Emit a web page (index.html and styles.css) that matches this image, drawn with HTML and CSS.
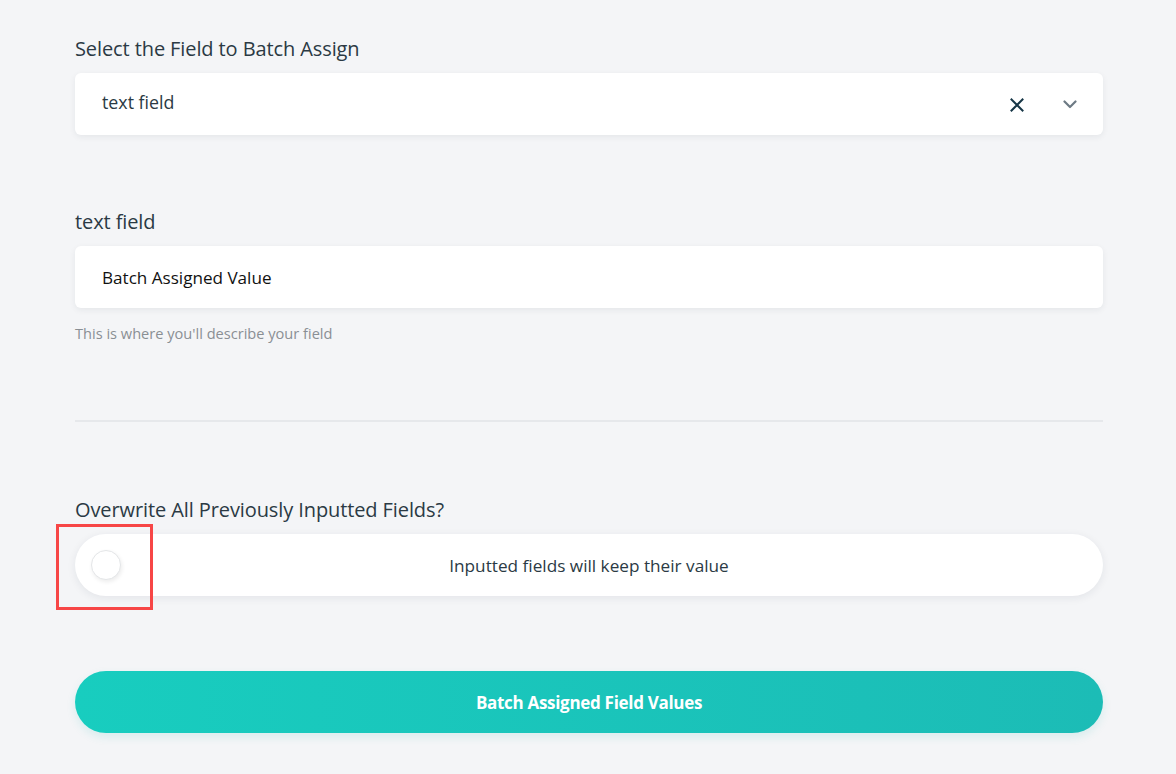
FILE: index.html
```html
<!DOCTYPE html>
<html>
<head>
<meta charset="utf-8">
<link rel="stylesheet" href="styles.css">
</head>
<body>
<main class="form">
  <section class="group group-select">
    <label class="label">Select the Field to Batch Assign</label>
    <div class="box select">
      <span class="select-value">text field</span>
      <span class="select-icons">
        <svg class="icon-x" width="14" height="14" viewBox="0 0 14 14"><path d="M1.5 1.5 L12.5 12.5 M12.5 1.5 L1.5 12.5" stroke="#163646" stroke-width="2" stroke-linecap="square" fill="none"/></svg>
        <svg class="icon-chev" width="14" height="9" viewBox="0 0 14 9"><path d="M1.5 1.5 L7 7 L12.5 1.5" stroke="#6d7a84" stroke-width="2.2" fill="none" stroke-linecap="round" stroke-linejoin="round"/></svg>
      </span>
    </div>
  </section>

  <section class="group group-text">
    <label class="label">text field</label>
    <div class="box input">Batch Assigned Value</div>
    <p class="help">This is where you'll describe your field</p>
  </section>

  <hr class="divider">

  <section class="group group-toggle">
    <label class="label">Overwrite All Previously Inputted Fields?</label>
    <div class="toggle">
      <span class="knob"></span>
      <span class="toggle-text">Inputted fields will keep their value</span>
      <span class="highlight"></span>
    </div>
  </section>

  <button class="submit">Batch Assigned Field Values</button>
</main>
</body>
</html>
```
FILE: styles.css
```css
* { box-sizing: border-box; }
html, body {
  margin: 0;
  background: #f4f5f7;
}
body {
  font-family: "Open Sans", "Noto Sans", sans-serif;
  color: #2b3a44;
  height: 774px;
  overflow: hidden;
}
.form {
  width: 1028px;
  margin-left: 75px;
  padding-top: 36px;
  display: flex;
  flex-direction: column;
}
.group { display: flex; flex-direction: column; }
.label {
  font-size: 20px;
  line-height: 26px;
  height: 26px;
  margin-bottom: 11px;
  color: #2b3a44;
  letter-spacing: -0.1px;
}
.box {
  height: 62px;
  background: #fff;
  border-radius: 6px;
  box-shadow: 0 2px 6px rgba(30, 40, 60, 0.07);
  display: flex;
  align-items: center;
  padding-left: 27px;
  font-size: 17.1px;
}
.select { justify-content: space-between; padding-right: 26px; }
.select-value { color: #2b3a44; margin-top: -4px; font-size: 17.8px; }
.select-icons { display: flex; align-items: center; gap: 39px; }
.icon-x { margin-top: 1px; }
.icon-chev { margin-top: 1px; }
.input { color: #111; }
.group-text { margin-top: 74px; }
.help {
  margin: 15px 0 0;
  font-size: 14.6px;
  line-height: 20px;
  color: #8a8f94;
}
.divider {
  margin: 77px 0 0;
  border: 0;
  height: 2px;
  background: #e6e8eb;
  width: 1028px;
}
.group-toggle { margin-top: 75px; }
.toggle {
  position: relative;
  height: 62px;
  background: #fff;
  border-radius: 31px;
  box-shadow: 0 2px 8px rgba(30, 40, 60, 0.08);
  display: flex;
  align-items: center;
  justify-content: center;
}
.knob {
  position: absolute;
  left: 16px;
  top: 16px;
  width: 30px;
  height: 30px;
  border-radius: 50%;
  background: #fff;
  border: 1px solid #e4e6e8;
  box-shadow: 1px 2px 4px rgba(0, 0, 0, 0.08);
}
.toggle-text { font-size: 17.2px; color: #2b3a44; }
.highlight {
  position: absolute;
  left: -19px;
  top: -10px;
  width: 97px;
  height: 86px;
  border: 3px solid #f74646;
}
.submit {
  margin-top: 75px;
  height: 62px;
  border: 0;
  border-radius: 31px;
  background: linear-gradient(90deg, #18cdbf 0%, #1cbcb6 100%);
  box-shadow: 0 4px 10px rgba(20, 180, 170, 0.12);
  color: #fff;
  font-family: "Open Sans", "Noto Sans", sans-serif;
  font-weight: 700;
  font-size: 17px;
  letter-spacing: -0.3px;
}
```
